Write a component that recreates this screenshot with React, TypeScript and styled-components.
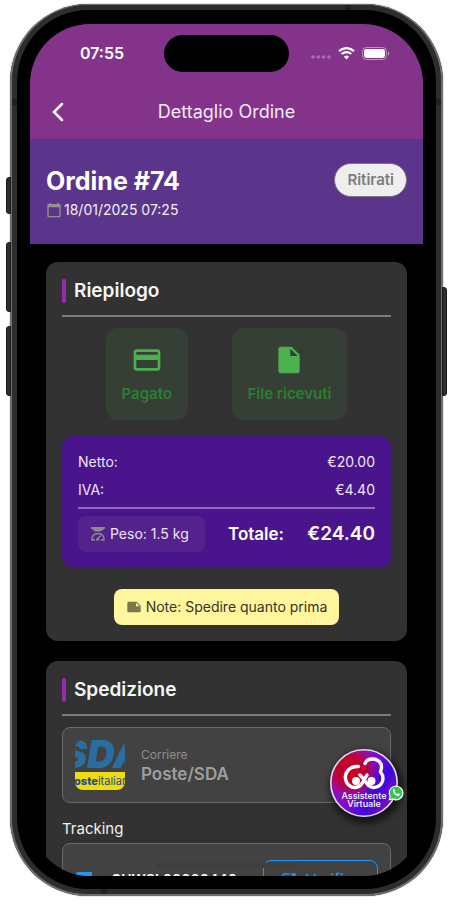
import React from 'react';
import styled, { createGlobalStyle } from 'styled-components';
import {
  MdCalendarToday,
  MdCreditCard,
  MdInsertDriveFile,
  MdLocalShipping,
  MdNote,
  MdOpenInNew,
} from 'react-icons/md';

const GlobalStyle = createGlobalStyle`
  *, *::before, *::after { box-sizing: border-box; }
  body {
    margin: 0;
    background: #ffffff;
    font-family: Inter, "Liberation Sans", sans-serif;
    font-size: 14px;
    line-height: 20px;
    color: #f0f0f0;
  }
  h1, h2, p, dl, dd, dt { margin: 0; }
  button { font: inherit; cursor: pointer; }
`;

const Page = styled.div`
  height: 100vh;
  padding: 4px 6px 11px 10px;
`;

const Device = styled.div`
  position: relative;
  height: 100%;
  padding: 19px 18px 18px;
  border: 2px solid #6c6f6d;
  border-top-width: 1px;
  border-radius: 78px;
  background: #000000;
  box-shadow: inset 0 0 0 5px #2c2e2e, 0 0 1px #111111;
`;

const SideButton = styled.span<{ $side: 'left' | 'right'; $top: number; $height: number }>`
  position: absolute;
  ${(p) => p.$side}: -6px;
  top: ${(p) => p.$top}px;
  width: 5px;
  height: ${(p) => p.$height}px;
  background: #2c2e2e;
  border: 1px solid #1a1a1a;
  border-radius: ${(p) => (p.$side === 'left' ? '3px 0 0 3px' : '0 3px 3px 0')};
`;

const AntennaBand = styled.span<{ $edge: 'left' | 'right' | 'top' | 'bottom' }>`
  position: absolute;
  background: #1f2121;
  ${(p) => p.$edge}: 0;
  ${(p) =>
    p.$edge === 'left' || p.$edge === 'right'
      ? 'top: 94px; width: 5px; height: 6px;'
      : 'width: 6px; height: 5px;'}
  ${(p) => (p.$edge === 'top' ? 'right: 90px;' : '')}
  ${(p) => (p.$edge === 'bottom' ? 'left: 89px;' : '')}
`;

const Screen = styled.div`
  position: relative;
  display: flex;
  flex-direction: column;
  height: 100%;
  overflow: hidden;
  border-radius: 60px;
  background: #000000;
`;

const TopBar = styled.header`
  flex: none;
  background: #83348a;
  color: #ffffff;
`;

const StatusBar = styled.div`
  display: grid;
  grid-template-columns: 1fr 125px 1fr;
  align-items: center;
  height: 60px;
  padding-bottom: 2px;
`;

const Clock = styled.time`
  padding-left: 10px;
  text-align: center;
  font-size: 16px;
  font-weight: 600;
`;

const Island = styled.div`
  height: 37px;
  border-radius: 19px;
  background: #000000;
`;

const StatusIcons = styled.div`
  display: flex;
  align-items: center;
  gap: 7px;
  padding-left: 22px;
`;

const NavBar = styled.div`
  display: grid;
  grid-template-columns: 56px 1fr 56px;
  align-items: center;
  height: 55px;
`;

const BackButton = styled.button`
  display: grid;
  place-items: center;
  height: 48px;
  padding: 0;
  border: 0;
  background: none;
  color: inherit;
`;

const NavTitle = styled.p`
  text-align: center;
  font-size: 18px;
  line-height: 24px;
  color: #f3eaf4;
`;

const OrderHeader = styled.section`
  display: flex;
  flex: none;
  align-items: flex-start;
  justify-content: space-between;
  padding: 24px 16px;
  background: #5b348b;
`;

const OrderTitle = styled.h1`
  font-size: 25px;
  line-height: 36px;
  font-weight: 700;
  color: #ffffff;
`;

const OrderDate = styled.p`
  display: flex;
  align-items: center;
  gap: 2px;
  height: 21px;

  svg { color: #95918f; }
`;

const StatusBadge = styled.span`
  padding: 6px 12px;
  border: 1px solid #777777;
  border-radius: 17px;
  background: #eeeeee;
  color: #7d7d7d;
  font-size: 15px;
  font-weight: 600;
`;

const Content = styled.main`
  display: flex;
  flex: 1;
  flex-direction: column;
  gap: 20px;
  min-height: 0;
  padding: 18px 16px;
  overflow-y: auto;
  scrollbar-width: none;
`;

const Card = styled.section`
  flex: none;
  padding: 17px 16px 16px;
  border-radius: 12px;
  background: #323232;
`;

const CardHeader = styled.div`
  display: flex;
  align-items: center;
  gap: 8px;
  padding-bottom: 12px;
  border-bottom: 2px solid #7b7b80;

  &::before {
    content: '';
    width: 4px;
    height: 24px;
    border-radius: 2px;
    background: #9c27b0;
  }
`;

const CardTitle = styled.h2`
  font-size: 19px;
  line-height: 24px;
  font-weight: 600;
  color: #f5f5f5;
`;

const Tiles = styled.div`
  display: flex;
  justify-content: space-evenly;
  margin: 11px 0 16px;
`;

const Tile = styled.div`
  display: flex;
  flex-direction: column;
  align-items: center;
  gap: 8px;
  padding: 16px;
  border-radius: 12px;
  background: #353f36;
  color: #2e7d32;
  font-size: 15px;
  font-weight: 600;

  svg { color: #4caf50; }
`;

const Totals = styled.div`
  padding: 16px;
  border-radius: 12px;
  background: #4a148c;
`;

const Amounts = styled.dl`
  display: flex;
  flex-direction: column;
  gap: 8px;
  padding-bottom: 7px;
  border-bottom: 2px solid #8f6cb3;
`;

const AmountRow = styled.div`
  display: flex;
  justify-content: space-between;
  color: #ece6f4;
`;

const TotalRow = styled.div`
  display: flex;
  align-items: center;
  justify-content: space-between;
  margin-top: 7px;
  color: #ffffff;
`;

const Weight = styled.span`
  display: flex;
  align-items: center;
  gap: 4px;
  padding: 8px 16px 8px 12px;
  border-radius: 8px;
  background: #54228d;
  color: #ece6f4;
`;

const TotalLabel = styled.span`
  font-size: 17px;
  font-weight: 600;
`;

const TotalValue = styled.span`
  font-size: 19px;
  font-weight: 600;
`;

const Note = styled.p`
  display: flex;
  align-items: center;
  gap: 4px;
  width: fit-content;
  margin: 21px auto 0;
  padding: 8px 12px;
  border-radius: 8px;
  background: #fff59d;
  color: #35332a;

  svg { color: #7b764c; }
`;

const Panel = styled.div`
  display: flex;
  align-items: center;
  padding: 12px;
  border: 1px solid #6a6a6a;
  border-radius: 8px;
  background: #424242;
`;

const CourierPanel = styled(Panel)`
  gap: 16px;
  margin: 11px 0 16px;
`;

const CourierLabel = styled.p`
  font-size: 12px;
  line-height: 18px;
  color: #8e8e8e;
`;

const CourierName = styled.p`
  font-size: 17px;
  font-weight: 600;
  color: #9e9e9e;
`;

const TrackingLabel = styled.p`
  font-size: 15px;
`;

const TrackingPanel = styled(Panel)`
  gap: 12px;
  margin-top: 4px;
  padding: 16px 12px;

  > svg { color: #2196f3; }
`;

const TrackingCode = styled.span`
  flex: 1;
  font-weight: 600;
  color: #ffffff;
`;

const VerifyButton = styled.button`
  display: flex;
  align-items: center;
  gap: 8px;
  height: 40px;
  padding: 0 16px;
  border: 1px solid #2196f3;
  border-radius: 8px;
  background: none;
  color: #2196f3;
  font-size: 15px;
  font-weight: 500;
`;

const HomeIndicator = styled.span`
  position: absolute;
  bottom: 8px;
  left: 50%;
  width: 140px;
  height: 5px;
  margin-left: -70px;
  border-radius: 3px;
  background: #3e3e3e;
`;

const AssistantButton = styled.button`
  position: absolute;
  right: 25px;
  bottom: 59px;
  width: 68px;
  height: 68px;
  padding: 0;
  border: 0;
  border-radius: 50%;
  background: none;
  box-shadow: 2px 4px 6px 3px rgba(0, 0, 0, 0.55);

  > svg { display: block; }
`;

const AssistantText = styled.span`
  position: absolute;
  inset: 43px 0 auto;
  color: #ffffff;
  font-size: 9px;
  line-height: 8px;
  font-weight: 500;
  text-align: center;
`;

const AssistantBadge = styled.span`
  position: absolute;
  right: -6px;
  bottom: 16px;
  width: 16px;
  height: 16px;

  svg { display: block; }
`;

const SignalDots = () => (
  <svg width="20" height="14" viewBox="0 0 20 14" fill="#ffffff" opacity="0.3" aria-hidden="true">
    <circle cx="2" cy="11" r="1.8" />
    <circle cx="7.3" cy="11" r="1.8" />
    <circle cx="12.6" cy="11" r="1.8" />
    <circle cx="17.9" cy="11" r="1.8" />
  </svg>
);

const WifiIcon = () => (
  <svg width="17" height="13" viewBox="0 0 17 13" fill="none" stroke="#ffffff" aria-hidden="true">
    <path d="M1 4.2a10.7 10.7 0 0 1 15 0" strokeWidth="2.3" />
    <path d="M3.7 7.1a6.9 6.9 0 0 1 9.6 0" strokeWidth="2.1" />
    <path d="M8.5 12.400 5.9 9.700a3.8 3.8 0 0 1 5.2 0z" fill="#ffffff" stroke="none" />
  </svg>
);

const BatteryIcon = () => (
  <svg width="28" height="13" viewBox="0 0 28 13" aria-hidden="true">
    <rect x="0.5" y="0.5" width="24" height="12" rx="3.8" fill="none" stroke="#ffffff" opacity="0.45" />
    <rect x="2" y="2" width="21" height="9" rx="2.4" fill="#ffffff" />
    <path d="M26 4.5c1.6.6 1.6 3.4 0 4z" fill="#ffffff" opacity="0.5" />
  </svg>
);

const BackIcon = () => (
  <svg width="12" height="20" viewBox="0 0 12 20" fill="none" stroke="currentColor" strokeWidth="2.5" strokeLinecap="round" aria-hidden="true">
    <path d="M10 2 2 10l8 8" />
  </svg>
);

const ScaleIcon = () => (
  <svg width="16" height="16" viewBox="0 0 16 16" fill="none" stroke="#8d8a8e" aria-hidden="true">
    <path d="M1 1h14v1.6L10.6 5.600H5.4L1 2.6z" fill="#8d8a8e" stroke="none" />
    <path d="M5 14H2C1.600 10.500 3.600 7.500 8 7.500s6.400 3 6 6.500h-3" strokeWidth="1.5" />
    <path d="M7.400 13.300 10.400 9.800" strokeWidth="1.5" />
    <circle cx="7.6" cy="13.200" r="1.500" fill="#8d8a8e" stroke="none" />
  </svg>
);

const CourierLogo = () => (
  <svg width="50" height="50" viewBox="0 0 50 50" role="img" aria-label="SDA Poste Italiane">
    <defs>
      <clipPath id="courier-clip">
        <rect width="50" height="50" rx="8" />
      </clipPath>
    </defs>
    <g clipPath="url(#courier-clip)" fontFamily="Inter, sans-serif">
      <text x="-13" y="28" fill="#2a6da0" fontSize="38" fontWeight="900" fontStyle="italic">SDA</text>
      <rect y="32" width="50" height="18" fill="#f0dc0a" />
      <text x="-8" y="45" fontSize="11" fill="#1a4a9c">
        <tspan fontWeight="800">Poste</tspan>
        <tspan>italiane</tspan>
      </text>
    </g>
  </svg>
);

const AssistantArt = () => (
  <svg width="68" height="68" viewBox="0 0 68 68" aria-hidden="true">
    <defs>
      <radialGradient id="assistant-red" cx="0.3" cy="0.32" r="0.4">
        <stop offset="0" stopColor="#d4001c" />
        <stop offset="0.55" stopColor="#bd0235" />
        <stop offset="1" stopColor="#bd0235" stopOpacity="0" />
      </radialGradient>
      <linearGradient id="assistant-base" x1="0" y1="0.2" x2="1" y2="0.8">
        <stop offset="0" stopColor="#a313c4" />
        <stop offset="0.5" stopColor="#7a0bcb" />
        <stop offset="0.7" stopColor="#3a08e0" />
        <stop offset="1" stopColor="#8c10b4" />
      </linearGradient>
    </defs>
    <circle cx="34" cy="34" r="33" fill="url(#assistant-base)" />
    <circle cx="34" cy="34" r="33" fill="url(#assistant-red)" />
    <circle cx="34" cy="34" r="33.2" fill="none" stroke="#e2dcea" strokeWidth="1.6" />
    <g fill="none" stroke="#ffffff" strokeWidth="3.4" strokeLinecap="round">
      <path d="M28.500 17.500C19 17 14.500 24 15.500 30c1 6 6 9 10 8.500 4-.5 7-4 8.500-7.500l3-5" />
      <path d="M35 14.500c3-6.500 13-5.500 16 .5 1.200 3 .2 5-.5 8 3.500 4 3 9 .5 12-3 4-9 4.500-12.500 1.500-2.500-2.500-4-6.500-8.500-10.500" />
    </g>
    <circle cx="26" cy="32" r="4" fill="#ffffff" />
    <circle cx="41.500" cy="32" r="4" fill="#ffffff" />
  </svg>
);

const ChatIcon = () => (
  <svg width="16" height="16" viewBox="0 0 16 16" aria-hidden="true">
    <path d="M.5 15.5l1.1-4A7.4 7.4 0 1 1 4.6 14.5z" fill="#ffffff" />
    <path d="M1.9 14.1l.8-2.9a6.2 6.2 0 1 1 2.2 2.1z" fill="#35c553" />
    <path d="M5.3 4.3c.5-.5 1-.4 1.2 0l.5 1.2c.1.4-.5.8-.6 1.1.6 1.2 1.5 2 2.7 2.5.4 0 .8-.9 1.1-.8l1.4.7c.4.3.1 1.2-.4 1.6-2.6 1.7-7.7-3.3-5.9-6.3z" fill="#ffffff" />
  </svg>
);

export default function App() {
  return (
    <>
      <GlobalStyle />
      <Page>
        <Device>
          <SideButton $side="left" $top={172} $height={37} />
          <SideButton $side="left" $top={237} $height={70} />
          <SideButton $side="left" $top={321} $height={70} />
          <SideButton $side="right" $top={282} $height={109} />
          <AntennaBand $edge="left" />
          <AntennaBand $edge="right" />
          <AntennaBand $edge="top" />
          <AntennaBand $edge="bottom" />
          <Screen>
            <TopBar>
              <StatusBar>
                <Clock>07:55</Clock>
                <Island />
                <StatusIcons>
                  <SignalDots />
                  <WifiIcon />
                  <BatteryIcon />
                </StatusIcons>
              </StatusBar>
              <NavBar>
                <BackButton type="button" aria-label="Indietro">
                  <BackIcon />
                </BackButton>
                <NavTitle>Dettaglio Ordine</NavTitle>
              </NavBar>
            </TopBar>
            <OrderHeader>
              <div>
                <OrderTitle>Ordine #74</OrderTitle>
                <OrderDate>
                  <MdCalendarToday size={16} />
                  <time dateTime="2025-01-18T07:25">18/01/2025 07:25</time>
                </OrderDate>
              </div>
              <StatusBadge>Ritirati</StatusBadge>
            </OrderHeader>
            <Content>
              <Card>
                <CardHeader>
                  <CardTitle>Riepilogo</CardTitle>
                </CardHeader>
                <Tiles>
                  <Tile>
                    <MdCreditCard size={32} />
                    Pagato
                  </Tile>
                  <Tile>
                    <MdInsertDriveFile size={32} />
                    File ricevuti
                  </Tile>
                </Tiles>
                <Totals>
                  <Amounts>
                    <AmountRow>
                      <dt>Netto:</dt>
                      <dd>€20.00</dd>
                    </AmountRow>
                    <AmountRow>
                      <dt>IVA:</dt>
                      <dd>€4.40</dd>
                    </AmountRow>
                  </Amounts>
                  <TotalRow>
                    <Weight>
                      <ScaleIcon />
                      Peso: 1.5 kg
                    </Weight>
                    <TotalLabel>Totale:</TotalLabel>
                    <TotalValue>€24.40</TotalValue>
                  </TotalRow>
                </Totals>
                <Note>
                  <MdNote size={16} />
                  Note: Spedire quanto prima
                </Note>
              </Card>
              <Card>
                <CardHeader>
                  <CardTitle>Spedizione</CardTitle>
                </CardHeader>
                <CourierPanel>
                  <CourierLogo />
                  <div>
                    <CourierLabel>Corriere</CourierLabel>
                    <CourierName>Poste/SDA</CourierName>
                  </div>
                </CourierPanel>
                <TrackingLabel>Tracking</TrackingLabel>
                <TrackingPanel>
                  <MdLocalShipping size={24} />
                  <TrackingCode>CUWSL00000440</TrackingCode>
                  <VerifyButton type="button">
                    <MdOpenInNew size={18} />
                    Verifica
                  </VerifyButton>
                </TrackingPanel>
              </Card>
            </Content>
            <HomeIndicator />
            <AssistantButton type="button">
              <AssistantArt />
              <AssistantText>
                Assistente
                <br />
                Virtuale
              </AssistantText>
              <AssistantBadge>
                <ChatIcon />
              </AssistantBadge>
            </AssistantButton>
          </Screen>
        </Device>
      </Page>
    </>
  );
}
